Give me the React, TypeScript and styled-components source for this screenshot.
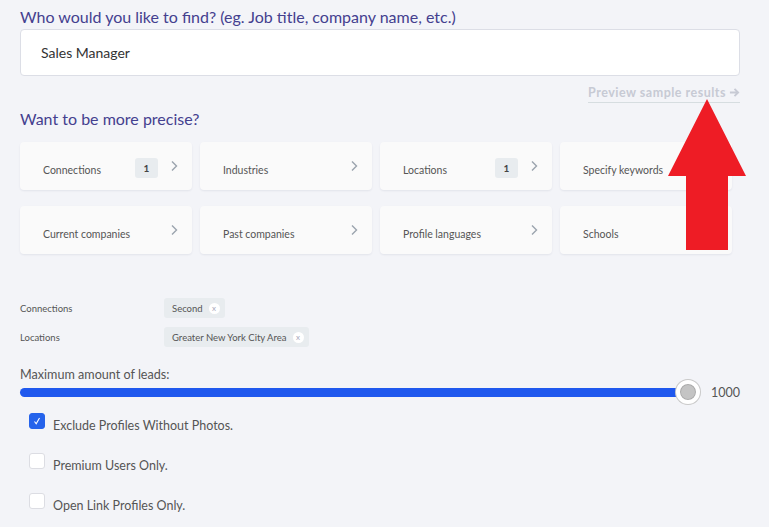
import styled, { createGlobalStyle } from 'styled-components';

const GlobalStyle = createGlobalStyle`
  html, body {
    margin: 0;
    padding: 0;
    background: #f3f4f8;
    font-family: 'Lato', 'Liberation Sans', sans-serif;
  }
`;

type Filter = {
  name: string;
  count?: number;
  chevron?: boolean;
};

const filters: Filter[] = [
  { name: 'Connections', count: 1, chevron: true },
  { name: 'Industries', chevron: true },
  { name: 'Locations', count: 1, chevron: true },
  { name: 'Specify keywords', chevron: true },
  { name: 'Current companies', chevron: true },
  { name: 'Past companies', chevron: true },
  { name: 'Profile languages', chevron: true },
  { name: 'Schools', chevron: true },
];

const selected = [
  { label: 'Connections', values: ['Second'] },
  { label: 'Locations', values: ['Greater New York City Area'] },
];

const options = [
  { label: 'Exclude Profiles Without Photos.', checked: true },
  { label: 'Premium Users Only.', checked: false },
  { label: 'Open Link Profiles Only.', checked: false },
];

const Chevron = () => (
  <svg width="8" height="12" viewBox="0 0 8 12">
    <path d="M2 1.5 L6.5 6 L2 10.5" fill="none" stroke="#9aa3ad" strokeWidth="1.4" />
  </svg>
);

const App: React.FC = () => {
  return (
    <Page>
      <GlobalStyle />
      <Heading>Who would you like to find? (eg. Job title, company name, etc.)</Heading>
      <SearchBox>Sales Manager</SearchBox>

      <PreviewRow>
        <PreviewLink>
          Preview sample results
          <svg width="11" height="11" viewBox="0 0 12 12">
            <path d="M1 6 H10 M6 2 L10 6 L6 10" fill="none" stroke="#c7cad4" strokeWidth="2" />
          </svg>
        </PreviewLink>
      </PreviewRow>

      <SubHeading>Want to be more precise?</SubHeading>

      <FilterGrid>
        {filters.map((f) => (
          <FilterCard key={f.name}>
            <FilterName>{f.name}</FilterName>
            {f.count && <Badge>{f.count}</Badge>}
            {f.chevron && <Chevron />}
          </FilterCard>
        ))}
      </FilterGrid>

      <Summary>
        {selected.map((s) => (
          <SummaryRow key={s.label}>
            <SummaryLabel>{s.label}</SummaryLabel>
            {s.values.map((v) => (
              <Chip key={v}>
                {v}
                <ChipClose>x</ChipClose>
              </Chip>
            ))}
          </SummaryRow>
        ))}
      </Summary>

      <SliderLabel>Maximum amount of leads:</SliderLabel>
      <SliderRow>
        <Track>
          <Thumb />
        </Track>
        <SliderValue>1000</SliderValue>
      </SliderRow>

      <Options>
        {options.map((o) => (
          <OptionRow key={o.label}>
            <Box $checked={o.checked}>
              {o.checked && (
                <svg width="10" height="10" viewBox="0 0 10 10">
                  <path d="M2.5 5.5 L4.2 7.8 L7.5 2" fill="none" stroke="#fff" strokeWidth="1.1" />
                </svg>
              )}
            </Box>
            <OptionLabel>{o.label}</OptionLabel>
          </OptionRow>
        ))}
      </Options>

      <Arrow width="80" height="152" viewBox="0 0 80 152">
        <polygon points="39,0 78,77 60,77 60,151 18,151 18,77 0,77" fill="#ee1c25" />
      </Arrow>
    </Page>
  );
};

export default App;

const Page = styled.div`
  position: relative;
  width: 769px;
  height: 527px;
  overflow: hidden;
  box-sizing: border-box;
  padding: 6px 29px 0 20px;
`;

const Heading = styled.div`
  font-size: 16px;
  color: #44408f;
  line-height: 22px;
`;

const SearchBox = styled.div`
  margin-top: 1px;
  height: 47px;
  box-sizing: border-box;
  background: #fff;
  border: 1px solid #dcdee6;
  border-radius: 4px;
  padding: 0 20px;
  display: flex;
  align-items: center;
  font-size: 14px;
  color: #333;
`;

const PreviewRow = styled.div`
  display: flex;
  justify-content: flex-end;
  margin-top: 9px;
`;

const PreviewLink = styled.div`
  display: flex;
  align-items: center;
  gap: 3px;
  font-size: 12.5px;
  font-weight: 700;
  letter-spacing: 0.5px;
  color: #c7cad4;
  padding-bottom: 2px;
  border-bottom: 1px solid #d6dde0;
`;

const SubHeading = styled.div`
  margin-top: 5px;
  font-size: 16px;
  color: #44408f;
  line-height: 22px;
`;

const FilterGrid = styled.div`
  margin-top: 12px;
  display: grid;
  grid-template-columns: repeat(4, 172px);
  column-gap: 8px;
  row-gap: 16px;
`;

const FilterCard = styled.div`
  height: 48px;
  box-sizing: border-box;
  background: #fafafa;
  border-radius: 4px;
  box-shadow: 0 1px 2px rgba(30, 40, 80, 0.08);
  display: flex;
  align-items: center;
  padding: 0 14px 0 23px;
  gap: 12px;
`;

const FilterName = styled.span`
  flex: 1;
  font-size: 10.5px;
  color: #555;
  padding-top: 7px;
`;

const Badge = styled.span`
  width: 23px;
  height: 20px;
  border-radius: 3px;
  background: #e8ecef;
  font-size: 10px;
  font-weight: 700;
  color: #444;
  display: flex;
  align-items: center;
  justify-content: center;
  margin-top: 3px;
`;

const Summary = styled.div`
  margin-top: 44px;
  display: flex;
  flex-direction: column;
  gap: 9px;
`;

const SummaryRow = styled.div`
  display: flex;
  align-items: center;
`;

const SummaryLabel = styled.span`
  width: 144px;
  font-size: 9.5px;
  color: #555;
`;

const Chip = styled.span`
  display: inline-flex;
  align-items: center;
  gap: 6px;
  height: 20px;
  padding: 0 5px 0 8px;
  border-radius: 3px;
  background: #e8ecef;
  font-size: 9.5px;
  color: #555;
`;

const ChipClose = styled.span`
  width: 11px;
  height: 11px;
  border-radius: 50%;
  background: #fff;
  color: #aab;
  font-size: 8px;
  display: flex;
  align-items: center;
  justify-content: center;
  line-height: 1;
`;

const SliderLabel = styled.div`
  margin-top: 20px;
  font-size: 12.6px;
  line-height: 16px;
  color: #555;
`;

const SliderRow = styled.div`
  display: flex;
  align-items: center;
  height: 18px;
`;

const Track = styled.div`
  position: relative;
  width: 669px;
  height: 9px;
  background: #1f58ee;
  border-radius: 5px;
`;

const Thumb = styled.div`
  position: absolute;
  right: -12px;
  top: 50%;
  transform: translateY(-50%);
  width: 16px;
  height: 16px;
  border-radius: 50%;
  background: #c4c4c4;
  border: 4px solid #fff;
  box-shadow: 0 0 0 1px #c9c9c9, inset 0 0 0 1px #aaa;
`;

const SliderValue = styled.span`
  margin-left: 23px;
  font-size: 12.5px;
  color: #555;
`;

const Options = styled.div`
  margin-top: 12px;
  padding-left: 9px;
  display: flex;
  flex-direction: column;
  gap: 24px;
`;

const OptionRow = styled.div`
  display: flex;
  align-items: flex-start;
  gap: 8px;
  height: 16px;
`;

const Box = styled.span<{ $checked: boolean }>`
  width: 16px;
  height: 16px;
  box-sizing: border-box;
  border-radius: 3px;
  background: ${(p) => (p.$checked ? '#2563eb' : '#fff')};
  border: 1px solid ${(p) => (p.$checked ? '#2563eb' : '#dcdde3')};
  display: flex;
  align-items: center;
  justify-content: center;
`;

const OptionLabel = styled.span`
  font-size: 12.5px;
  color: #555;
  margin-top: 5px;
`;

const Arrow = styled.svg`
  position: absolute;
  left: 668px;
  top: 99px;
`;
